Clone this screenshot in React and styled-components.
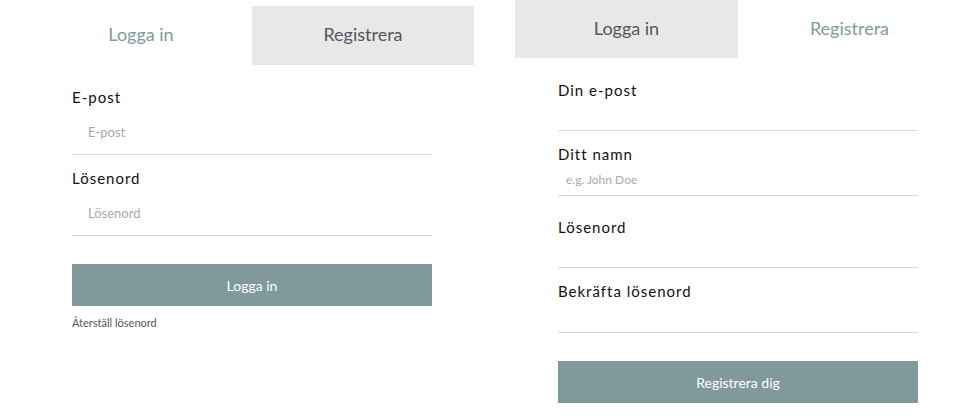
import React from "react";
import styled, { createGlobalStyle } from "styled-components";

const Global = createGlobalStyle`
  html, body { margin: 0; padding: 0; background: #fff; }
  body { font-family: "Lato", "Open Sans", sans-serif; overflow: hidden; }
  * { box-sizing: border-box; }
`;

const Page = styled.div`
  display: flex;
  align-items: flex-start;
  gap: 41px;
  padding-left: 30px;
  width: 1000px;
`;

const Panel = styled.section`
  width: ${(p) => p.$w}px;
  flex: none;
  margin-top: ${(p) => p.$top}px;
`;

const Tabs = styled.div`
  display: grid;
  grid-template-columns: 1fr 1fr;
  height: ${(p) => p.$h}px;
`;

const Tab = styled.div`
  display: flex;
  align-items: center;
  justify-content: center;
  padding-bottom: 3px;
  font-size: 18px;
  font-weight: 400;
  color: ${(p) => (p.$active ? "#555560" : "#7f9a9b")};
  background: ${(p) => (p.$active ? "#e8e8e8" : "transparent")};
`;

const Form = styled.form`
  width: 360px;
  margin: 0 auto;
  padding-top: ${(p) => p.$pt}px;
  display: flex;
  flex-direction: column;
`;

const Label = styled.label`
  display: block;
  height: 20px;
  line-height: 20px;
  font-size: 15px;
  letter-spacing: 1px;
  color: #111;
`;

const Input = styled.div`
  height: ${(p) => p.$h}px;
  margin-top: ${(p) => p.$mt}px;
  margin-bottom: ${(p) => p.$mb}px;
  border-bottom: 1px solid #d6d7db;
  display: flex;
  align-items: center;
  padding-left: ${(p) => p.$pl}px;
  font-size: ${(p) => p.$fs}px;
  color: #a9a9ad;
`;

const Button = styled.button`
  height: 42px;
  border: none;
  background: #809a9b;
  color: #fff;
  font-family: inherit;
  font-size: 14px;
  font-weight: 400;
  margin-top: ${(p) => p.$mt}px;
  padding: 0;
`;

const Link = styled.a`
  font-size: 11px;
  color: #555;
  margin-top: 10px;
  line-height: 14px;
`;

export default function App() {
  return (
    <>
      <Global />
      <Page>
        <Panel $w={444} $top={6}>
          <Tabs $h={59}>
            <Tab>Logga in</Tab>
            <Tab $active>Registrera</Tab>
          </Tabs>
          <Form $pt={22}>
            <Label>E-post</Label>
            <Input $h={45} $mt={3} $mb={13} $pl={16} $fs={13}>E-post</Input>
            <Label>Lösenord</Label>
            <Input $h={45} $mt={3} $mb={13} $pl={16} $fs={13}>Lösenord</Input>
            <Button $mt={15}>Logga in</Button>
            <Link>Återställ lösenord</Link>
          </Form>
        </Panel>
        <Panel $w={446} $top={0}>
          <Tabs $h={58}>
            <Tab $active>Logga in</Tab>
            <Tab>Registrera</Tab>
          </Tabs>
          <Form $pt={22}>
            <Label>Din e-post</Label>
            <Input $h={31} $mt={0} $mb={13} $pl={8} $fs={12}></Input>
            <Label>Ditt namn</Label>
            <Input $h={32} $mt={0} $mb={21} $pl={8} $fs={12}>e.g. John Doe</Input>
            <Label>Lösenord</Label>
            <Input $h={31} $mt={0} $mb={13} $pl={8} $fs={12}></Input>
            <Label>Bekräfta lösenord</Label>
            <Input $h={32} $mt={0} $mb={13} $pl={8} $fs={12}></Input>
            <Button $mt={15}>Registrera dig</Button>
          </Form>
        </Panel>
      </Page>
    </>
  );
}
